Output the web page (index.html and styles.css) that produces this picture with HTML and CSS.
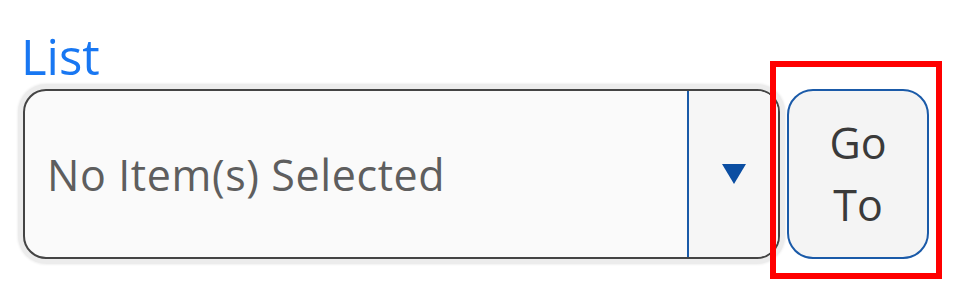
FILE: index.html
```html
<!DOCTYPE html>
<html lang="en">
<head>
<meta charset="utf-8">
<title>List</title>
<link rel="stylesheet" href="styles.css">
</head>
<body>
<div class="field">
  <label class="field-label">List</label>
  <div class="field-row">
    <div class="select">
      <div class="select-value">No Item(s) Selected</div>
      <div class="select-toggle">
        <svg class="caret" width="24" height="20" viewBox="0 0 24 20" aria-hidden="true"><polygon points="0,0 24,0 12,20" fill="#0b4ea2"/></svg>
      </div>
    </div>
    <div class="goto-wrap">
      <button class="goto">Go<br>To</button>
    </div>
  </div>
</div>
</body>
</html>
```
FILE: styles.css
```css
html, body {
  margin: 0;
  padding: 0;
  background: #ffffff;
}

body {
  font-family: "Open Sans", "Noto Sans", sans-serif;
  width: 954px;
  height: 308px;
  overflow: hidden;
}

.field {
  padding: 28px 0 0 23px;
}

.field-label {
  display: block;
  font-size: 49px;
  line-height: 56px;
  color: #1877f2;
  margin-left: -2px;
}

.field-row {
  display: flex;
  align-items: stretch;
  margin-top: 5px;
}

.select {
  display: flex;
  width: 757px;
  height: 170px;
  box-sizing: border-box;
  border: 2px solid #444444;
  border-radius: 23px;
  background: #fafafa;
  box-shadow: 0 0 0 5px #ececec, 0 0 2px 6px #f2f2f2;
  overflow: hidden;
}

.select-value {
  flex: 1;
  display: flex;
  align-items: center;
  padding: 0 0 0 22px;
  font-size: 43px;
  letter-spacing: 0.6px;
  color: #5e5e5e;
}

.select-toggle {
  width: 89px;
  border-left: 2px solid #1a5aa8;
  background: #f6f6f6;
  display: flex;
  align-items: center;
  justify-content: center;
}

.caret {
  display: block;
  margin-left: 1px;
}

.goto-wrap {
  position: relative;
  margin-left: 7px;
}

.goto-wrap::after {
  content: "";
  position: absolute;
  top: -28px;
  left: -17px;
  right: -13px;
  bottom: -20px;
  border: 6px solid #ff0000;
  pointer-events: none;
}

.goto {
  display: block;
  width: 142px;
  height: 170px;
  box-sizing: border-box;
  border: 2px solid #1a5aa8;
  border-radius: 26px;
  background: #f4f4f4;
  font-family: "Open Sans", "Noto Sans", sans-serif;
  font-size: 43px;
  line-height: 62px;
  color: #3a3a3a;
  padding: 0;
  text-align: center;
}
```
